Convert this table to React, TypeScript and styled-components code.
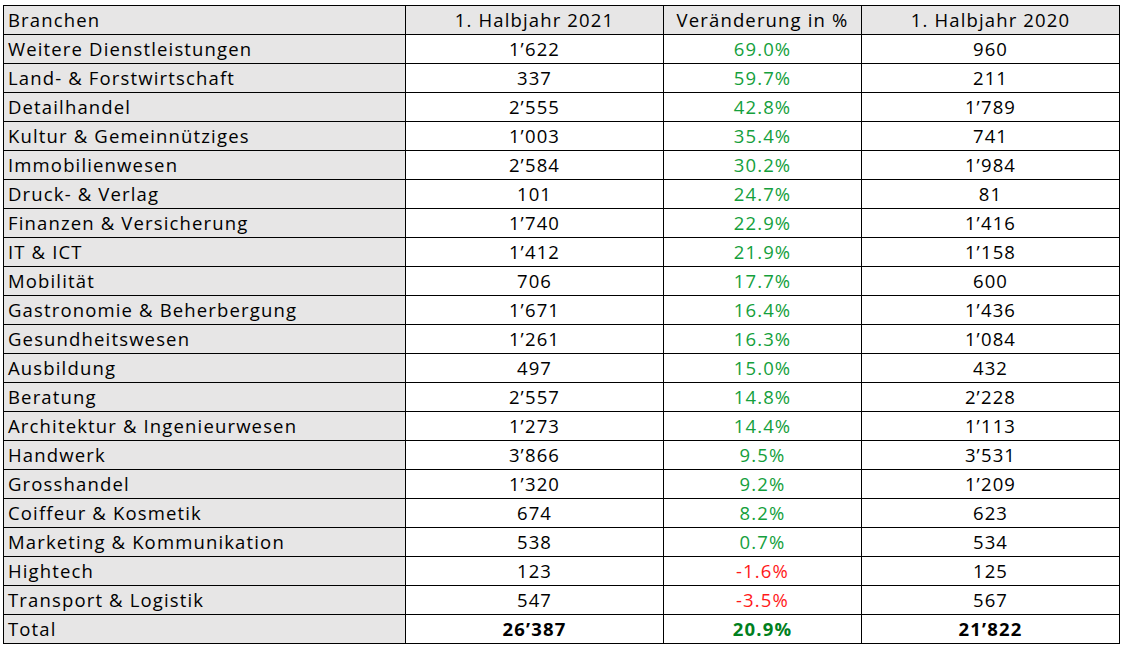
import React from "react";
import styled, { createGlobalStyle } from "styled-components";

const Global = createGlobalStyle`
  html, body { margin: 0; padding: 0; background: #ffffff; }
  body { font-family: "Open Sans", "Lato", "Liberation Sans", sans-serif; }
`;

const Page = styled.div`
  padding: 5px 0 0 3px;
`;

const Grid = styled.div`
  display: grid;
  grid-template-columns: 402px 258px 198px 258px;
  grid-auto-rows: 29px;
  width: max-content;
  border-left: 1px solid #000;
  border-top: 1px solid #000;
`;

type Tone = "plain" | "up" | "down" | "totalUp";

const toneColor: Record<Tone, string> = {
  plain: "#000000",
  up: "#14a03c",
  down: "#ff1a1a",
  totalUp: "#00801e",
};

const Cell = styled.div<{ $label?: boolean; $head?: boolean; $bold?: boolean; $tone?: Tone }>`
  box-sizing: border-box;
  border-right: 1px solid #000;
  border-bottom: 1px solid #000;
  display: flex;
  align-items: center;
  justify-content: ${(p) => (p.$label ? "flex-start" : "center")};
  padding: ${(p) => (p.$label ? "0 0 1px 4px" : "0 0 1px 0")};
  background: ${(p) => (p.$label || p.$head ? "#e7e6e6" : "#ffffff")};
  color: ${(p) => toneColor[p.$tone ?? "plain"]};
  font-size: 18.5px;
  letter-spacing: 1.15px;
  font-weight: ${(p) => (p.$bold ? 700 : 500)};
  white-space: nowrap;
  overflow: hidden;
`;

type Row = [string, string, string, string];

const rows: Row[] = [
  ["Weitere Dienstleistungen", "1’622", "69.0%", "960"],
  ["Land- & Forstwirtschaft", "337", "59.7%", "211"],
  ["Detailhandel", "2’555", "42.8%", "1’789"],
  ["Kultur & Gemeinnütziges", "1’003", "35.4%", "741"],
  ["Immobilienwesen", "2’584", "30.2%", "1’984"],
  ["Druck- & Verlag", "101", "24.7%", "81"],
  ["Finanzen & Versicherung", "1’740", "22.9%", "1’416"],
  ["IT & ICT", "1’412", "21.9%", "1’158"],
  ["Mobilität", "706", "17.7%", "600"],
  ["Gastronomie & Beherbergung", "1’671", "16.4%", "1’436"],
  ["Gesundheitswesen", "1’261", "16.3%", "1’084"],
  ["Ausbildung", "497", "15.0%", "432"],
  ["Beratung", "2’557", "14.8%", "2’228"],
  ["Architektur & Ingenieurwesen", "1’273", "14.4%", "1’113"],
  ["Handwerk", "3’866", "9.5%", "3’531"],
  ["Grosshandel", "1’320", "9.2%", "1’209"],
  ["Coiffeur & Kosmetik", "674", "8.2%", "623"],
  ["Marketing & Kommunikation", "538", "0.7%", "534"],
  ["Hightech", "123", "-1.6%", "125"],
  ["Transport & Logistik", "547", "-3.5%", "567"],
];

export default function App() {
  return (
    <Page>
      <Global />
      <Grid>
        <Cell $label $head>Branchen</Cell>
        <Cell $head>1. Halbjahr 2021</Cell>
        <Cell $head>Veränderung in %</Cell>
        <Cell $head>1. Halbjahr 2020</Cell>
        {rows.map(([name, a, pct, b]) => (
          <React.Fragment key={name}>
            <Cell $label>{name}</Cell>
            <Cell>{a}</Cell>
            <Cell $tone={pct.startsWith("-") ? "down" : "up"}>{pct}</Cell>
            <Cell>{b}</Cell>
          </React.Fragment>
        ))}
        <Cell $label>Total</Cell>
        <Cell $bold>26’387</Cell>
        <Cell $bold $tone="totalUp">20.9%</Cell>
        <Cell $bold>21’822</Cell>
      </Grid>
    </Page>
  );
}
